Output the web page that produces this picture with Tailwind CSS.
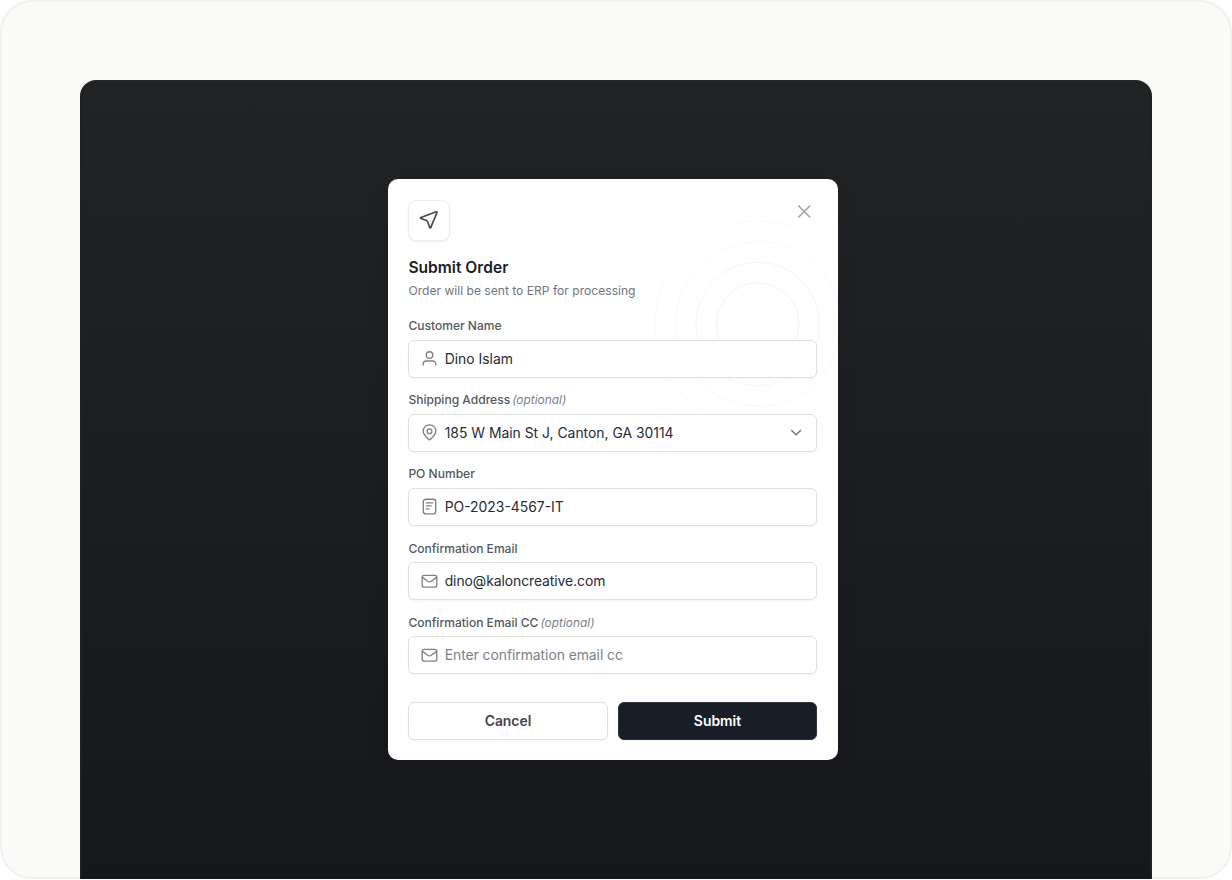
<!DOCTYPE html>
<html lang="en">
<head>
<meta charset="utf-8">
<title>Submit Order</title>
<script src="https://cdn.jsdelivr.net/npm/@tailwindcss/browser@4"></script>
</head>
<body class="bg-white font-['Inter',sans-serif] antialiased">
<main class="h-[879px] w-[1232px] rounded-[32px] border-2 border-[#f1f1f0] bg-[#fafaf8] px-[78px] pt-[78px]">
  <div class="flex h-[799px] justify-center rounded-t-2xl border-x-2 border-t border-x-[#1e2124] border-t-[#25292b] bg-linear-to-b from-[#222325] via-[#1b1d20] to-[#16171b] pt-[98px] pr-[6px]">
    <section class="relative h-[581px] w-[450px] overflow-hidden rounded-[10px] bg-white pt-[20.5px] pr-[20.9px] pl-[20.4px] shadow-[0_8px_24px_rgba(0,0,0,0.06)]">
      <svg class="absolute top-0 left-0" width="450" height="581" fill="none">
        <circle cx="369.8" cy="145" r="41.2" stroke="#f4f4f5"/>
        <circle cx="369.8" cy="145" r="61.8" stroke="#f6f6f7"/>
        <circle cx="369.8" cy="145" r="82.4" stroke="#f8f8f8"/>
        <circle cx="369.8" cy="145" r="103" stroke="#fafafa"/>
        <circle cx="369.8" cy="145" r="123.6" stroke="#fdfdfd"/>
      </svg>
      <div class="relative">
        <header class="h-[119.5px]">
          <div class="flex items-start justify-between">
            <div class="flex size-[41.2px] items-center justify-center rounded-[8px] border border-[#ebecee] bg-white shadow-[0_1px_2px_rgba(16,24,40,0.07)]">
              <svg width="20" height="20" viewBox="0 0 21 21" fill="none" stroke="#414651" stroke-width="1.7" stroke-linejoin="round" stroke-linecap="round"><path d="M18.1 1.9 2.1 7.9c-.7.3-.7.8 0 1.1l5.7 2c.7.3 1 .6 1.3 1.3l2.2 6c.3.7.8.7 1.1 0l6.5-15.6c.2-.6-.2-1-.8-.8Z"/></svg>
            </div>
            <svg class="mt-[1.9px] mr-[1.8px]" width="21" height="21" viewBox="0 0 21 21" fill="none" stroke="#a4a7ae" stroke-width="1.7" stroke-linecap="round"><path d="m4.8 5 11 11M15.8 5 4.8 16"/></svg>
          </div>
          <h1 class="mt-[15px] text-[15.6px] leading-6 font-semibold text-[#181d27]">Submit Order</h1>
          <p class="mt-[1px] text-[12.1px] leading-5 text-[#717680]">Order will be sent to ERP for processing</p>
        </header>
        <form>
          <div class="h-[74.2px]">
            <label class="block h-[20.5px] text-[12.05px] leading-[13px] font-medium text-[#535862]">Customer Name</label>
            <div class="flex h-[38px] items-center gap-[7px] rounded-[6px] border border-[#dfe0e2] bg-white px-[11.3px] text-[13.9px] text-[#252b37] shadow-[0_1px_2px_rgba(16,24,40,0.05)]">
              <svg width="17" height="17" viewBox="0 0 17 17" fill="none" stroke="#7c818a" stroke-width="1.35" stroke-linecap="round"><circle cx="8.5" cy="5" r="3.3"/><path d="M2.2 15v-1a3 3 0 0 1 3-3h6.6a3 3 0 0 1 3 3v1"/></svg>
              <span class="pt-[1.2px]">Dino Islam</span>
            </div>
          </div>
          <div class="h-[74.2px]">
            <label class="block h-[20.5px] text-[12.05px] leading-[13px] font-medium text-[#535862]">Shipping Address<span class="ml-[2px] text-[11.9px] font-normal text-[#7c818a] italic">(optional)</span></label>
            <div class="flex h-[38px] items-center gap-[7px] rounded-[6px] border border-[#dfe0e2] bg-white px-[11.3px] text-[13.9px] text-[#252b37] shadow-[0_1px_2px_rgba(16,24,40,0.05)]">
              <svg width="17" height="17" viewBox="0 0 17 17" fill="none" stroke="#7c818a" stroke-width="1.35" stroke-linejoin="round"><path d="M8.5 15.7c-.5 0-1-.3-1.4-.7C4.6 12.5 2.2 10.3 2.2 7.1a6.3 6.3 0 0 1 12.6 0c0 3.2-2.4 5.4-4.9 7.9-.4.4-.9.7-1.4.7Z"/><circle cx="8.5" cy="7.2" r="2.4"/></svg>
              <span class="pt-[1.2px]">185 W Main St J, Canton, GA 30114</span>
              <svg class="ml-auto" width="17" height="17" viewBox="0 0 17 17" fill="none" stroke="#717680" stroke-width="1.4" stroke-linecap="round" stroke-linejoin="round"><path d="m3.600 6.400 4.500 4.300 4.500-4.300"/></svg>
            </div>
          </div>
          <div class="h-[74.2px]">
            <label class="block h-[20.5px] text-[12.05px] leading-[13px] font-medium text-[#535862]">PO Number</label>
            <div class="flex h-[38px] items-center gap-[7px] rounded-[6px] border border-[#dfe0e2] bg-white px-[11.3px] text-[13.9px] text-[#252b37] shadow-[0_1px_2px_rgba(16,24,40,0.05)]">
              <svg width="17" height="17" viewBox="0 0 17 17" fill="none" stroke="#7c818a" stroke-width="1.35" stroke-linecap="round"><rect x="2.3" y="1.2" width="12.4" height="14.6" rx="2.4"/><path d="M5.4 4.9h6.2M5.4 7.9h4.8M5.4 10.9h2.4"/></svg>
              <span class="pt-[1.2px]">PO-2023-4567-IT</span>
            </div>
          </div>
          <div class="h-[74.2px]">
            <label class="block h-[20.5px] text-[12.05px] leading-[13px] font-medium text-[#535862]">Confirmation Email</label>
            <div class="flex h-[38px] items-center gap-[7px] rounded-[6px] border border-[#dfe0e2] bg-white px-[11.3px] text-[13.9px] text-[#252b37] shadow-[0_1px_2px_rgba(16,24,40,0.05)]">
              <svg width="17" height="17" viewBox="0 0 17 17" fill="none" stroke="#7c818a" stroke-width="1.35" stroke-linecap="round" stroke-linejoin="round"><rect x="1.2" y="2.3" width="14.6" height="11.8" rx="1.9"/><path d="m1.5 4.4 5.2 3.800c1.2.9 2.400.9 3.600 0l5.200-3.800"/></svg>
              <span class="pt-[0.500px] tracking-[-0.070px]">dino@kaloncreative.com</span>
            </div>
          </div>
          <div class="h-[86px]">
            <label class="block h-[20.5px] text-[12.05px] leading-[13px] font-medium text-[#535862]">Confirmation Email CC<span class="ml-[2px] text-[11.9px] font-normal text-[#7c818a] italic">(optional)</span></label>
            <div class="flex h-[38px] items-center gap-[7px] rounded-[6px] border border-[#dfe0e2] bg-white px-[11.3px] text-[13.9px] text-[#7c818a] shadow-[0_1px_2px_rgba(16,24,40,0.05)]">
              <svg width="17" height="17" viewBox="0 0 17 17" fill="none" stroke="#7c818a" stroke-width="1.35" stroke-linecap="round" stroke-linejoin="round"><rect x="1.2" y="2.3" width="14.6" height="11.8" rx="1.9"/><path d="m1.5 4.4 5.2 3.800c1.2.9 2.400.9 3.600 0l5.200-3.800"/></svg>
              <span class="pt-[1.2px] tracking-[-0.050px]">Enter confirmation email cc</span>
            </div>
          </div>
          <div class="grid grid-cols-2 gap-[10.3px] text-[13.9px] font-semibold">
            <button type="button" class="h-[38px] rounded-[6px] border border-[#dfe0e2] bg-white pt-[1.2px] text-[#414651] shadow-[0_1px_2px_rgba(16,24,40,0.05)]">Cancel</button>
            <button type="button" class="h-[38px] rounded-[6px] border border-[#30343e] bg-[#191d28] pt-[1.2px] text-white shadow-[0_1px_2px_rgba(16,24,40,0.05)]">Submit</button>
          </div>
        </form>
      </div>
    </section>
  </div>
</main>
</body>
</html>
